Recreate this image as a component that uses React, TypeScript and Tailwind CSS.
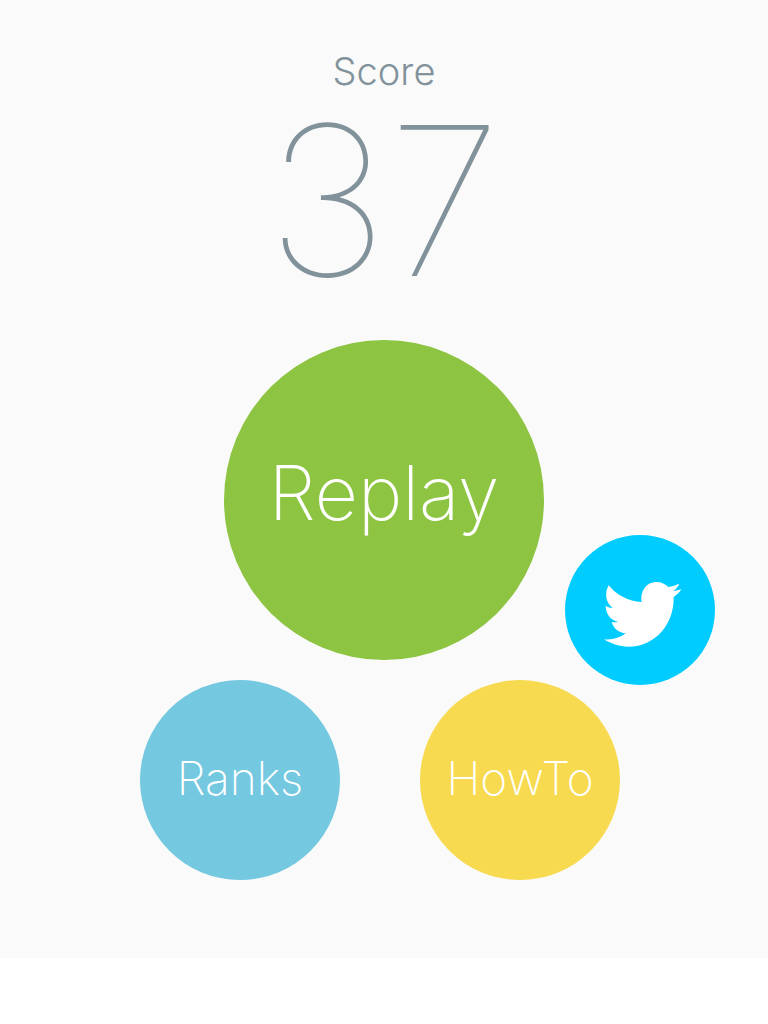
import React from "react";

interface CircleButtonProps {
  label: string;
  className: string;
}

const CircleButton: React.FC<CircleButtonProps> = ({ label, className }) => (
  <button
    type="button"
    className={`grid shrink-0 cursor-pointer place-items-center rounded-full text-white ${className}`}
  >
    {label}
  </button>
);

const BirdIcon: React.FC<{ className?: string }> = ({ className }) => (
  <svg
    viewBox="15 15 450 450"
    fill="currentColor"
    aria-hidden="true"
    className={className}
  >
    <path d="M146 166C170 196 205 214 245 216C240 184 258 156 290 156C304 156 316 162 325 171C336 169 348 165 358 161C354 170 348 177 340 183C348 183 356 180 364 178C359 187 350 195 341 201C343 282 286 350 205 350C179 350 154 342 132 328C156 331 179 324 197 310C177 309 161 296 155 276C162 277 168 277 174 275C152 271 137 251 137 228C144 232 151 234 158 234C138 219 132 191 146 166Z" />
  </svg>
);

const App: React.FC = () => (
  <div className="min-h-screen bg-white">
    <main className="flex flex-col items-center bg-[#fafafa] pt-12 pb-[78px] font-['Inter','Liberation_Sans',sans-serif] font-extralight">
      <h1 className="text-[38px] leading-[46px] font-light text-[#82929b]">
        Score
      </h1>
      <p className="mt-2.5 text-[208px] leading-[192px] font-thin text-[#82929b]">
        37
      </p>

      <div className="relative mt-11">
        <CircleButton
          label="Replay"
          className="size-80 bg-[#8dc543] pb-4 text-[75px] leading-none"
        />
        <a
          href="#tweet"
          aria-label="Twitter"
          className="absolute top-[195px] left-[341px] block size-[150px] rounded-full bg-[#00ccff] text-white"
        >
          <BirdIcon className="size-full" />
        </a>
      </div>

      <div className="mt-5 flex justify-center gap-20 pr-2">
        <CircleButton
          label="Ranks"
          className="size-[200px] bg-[#74c8e0] pb-1 text-[46px] leading-none"
        />
        <CircleButton
          label="HowTo"
          className="size-[200px] bg-[#f7da50] pb-1 text-[46px] leading-none"
        />
      </div>
    </main>
  </div>
);

export default App;
